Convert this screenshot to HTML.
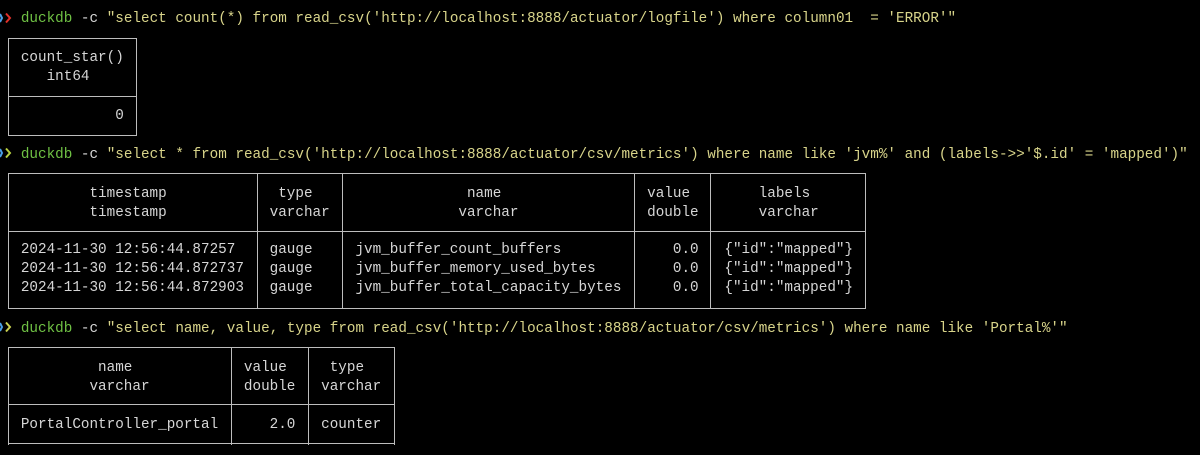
<!DOCTYPE html>
<html><head><meta charset="utf-8"><style>
html,body{margin:0;padding:0;background:#000;width:1200px;height:455px;overflow:hidden}
#c{position:absolute;left:3.7px;top:2px;font-family:"Liberation Mono","DejaVu Sans Mono",monospace;font-size:14.3px;color:#d6d6d6}
.t{position:absolute;white-space:pre;line-height:19.36px}
.g{color:#6fc144}.y{color:#d8d48a}.w{color:#d6d6d6}
.h{position:absolute;height:1.4px;background:#bdbdbd}
.v{position:absolute;width:1.4px;background:#bdbdbd}
svg{position:absolute}
</style></head><body>
<svg width="20" height="455" style="left:0;top:0">
<polyline points="0,14 2,18 0,22" fill="none" stroke="#4aa0e8" stroke-width="2"/>
<polyline points="6,13.5 10,18 6,22.5" fill="none" stroke="#e0302a" stroke-width="2"/>
<polyline points="0,149 2,153 0,157" fill="none" stroke="#4aa0e8" stroke-width="2"/>
<polyline points="6,148.5 10,153 6,157.5" fill="none" stroke="#b8d040" stroke-width="2"/>
<polyline points="0,323 2,327 0,331" fill="none" stroke="#4aa0e8" stroke-width="2"/>
<polyline points="6,322.5 10,327 6,331.5" fill="none" stroke="#c8d050" stroke-width="2"/>
</svg>
<div id="c">
<div class="t" style="top:8.3px;left:2ch"><span class="g">duckdb</span> <span class="w">-c</span> <span class="y">"select count(*) from read_csv('http://localhost:8888/actuator/logfile') where column01  = 'ERROR'"</span></div>
<div class="t" style="top:47px;left:2ch">count_star()</div>
<div class="t" style="top:66.4px;left:5ch">int64</div>
<div class="t" style="top:105.1px;left:13ch">0</div>

<div class="t" style="top:143.8px;left:2ch"><span class="g">duckdb</span> <span class="w">-c</span> <span class="y">"select * from read_csv('http://localhost:8888/actuator/csv/metrics') where name like 'jvm%' and (labels-&gt;&gt;'$.id' = 'mapped')"</span></div>
<div class="t" style="top:182.5px;left:10ch">timestamp</div>
<div class="t" style="top:201.9px;left:10ch">timestamp</div>
<div class="t" style="top:182.5px;left:32ch">type</div>
<div class="t" style="top:201.9px;left:31ch">varchar</div>
<div class="t" style="top:182.5px;left:54ch">name</div>
<div class="t" style="top:201.9px;left:53ch">varchar</div>
<div class="t" style="top:182.5px;left:75ch">value</div>
<div class="t" style="top:201.9px;left:75ch">double</div>
<div class="t" style="top:182.5px;left:88ch">labels</div>
<div class="t" style="top:201.9px;left:88ch">varchar</div>
<div class="t" style="top:238.6px;left:2ch">2024-11-30 12:56:44.87257
2024-11-30 12:56:44.872737
2024-11-30 12:56:44.872903</div>
<div class="t" style="top:238.6px;left:31ch">gauge
gauge
gauge</div>
<div class="t" style="top:238.6px;left:41ch">jvm_buffer_count_buffers
jvm_buffer_memory_used_bytes
jvm_buffer_total_capacity_bytes</div>
<div class="t" style="top:238.6px;left:78ch">0.0
0.0
0.0</div>
<div class="t" style="top:238.6px;left:84ch">{"id":"mapped"}
{"id":"mapped"}
{"id":"mapped"}</div>

<div class="t" style="top:318.1px;left:2ch"><span class="g">duckdb</span> <span class="w">-c</span> <span class="y">"select name, value, type from read_csv('http://localhost:8888/actuator/csv/metrics') where name like 'Portal%'"</span></div>
<div class="t" style="top:356.8px;left:11ch">name</div>
<div class="t" style="top:376.1px;left:10ch">varchar</div>
<div class="t" style="top:356.8px;left:28ch">value</div>
<div class="t" style="top:376.1px;left:28ch">double</div>
<div class="t" style="top:356.8px;left:38ch">type</div>
<div class="t" style="top:376.1px;left:37ch">varchar</div>
<div class="t" style="top:413.9px;left:2ch">PortalController_portal</div>
<div class="t" style="top:413.9px;left:31ch">2.0</div>
<div class="t" style="top:413.9px;left:37ch">counter</div>
</div>

<div class="h" style="left:8px;width:129px;top:38px"></div>
<div class="h" style="left:8px;width:129px;top:96px"></div>
<div class="h" style="left:8px;width:129px;top:134.5px"></div>
<div class="v" style="left:8px;top:38px;height:98px"></div>
<div class="v" style="left:136px;top:38px;height:98px"></div>

<div class="h" style="left:8px;width:858px;top:173px"></div>
<div class="h" style="left:8px;width:858px;top:231px"></div>
<div class="h" style="left:8px;width:858px;top:307.5px"></div>
<div class="v" style="left:8px;top:173px;height:136px"></div>
<div class="v" style="left:256.5px;top:173px;height:136px"></div>
<div class="v" style="left:342px;top:173px;height:136px"></div>
<div class="v" style="left:633.5px;top:173px;height:136px"></div>
<div class="v" style="left:710px;top:173px;height:136px"></div>
<div class="v" style="left:865px;top:173px;height:136px"></div>

<div class="h" style="left:8px;width:387px;top:347px"></div>
<div class="h" style="left:8px;width:387px;top:404px"></div>
<div class="h" style="left:8px;width:387px;top:443px"></div>
<div class="v" style="left:8px;top:347px;height:97.5px"></div>
<div class="v" style="left:231px;top:347px;height:97.5px"></div>
<div class="v" style="left:308px;top:347px;height:97.5px"></div>
<div class="v" style="left:394px;top:347px;height:97.5px"></div>
</body></html>
